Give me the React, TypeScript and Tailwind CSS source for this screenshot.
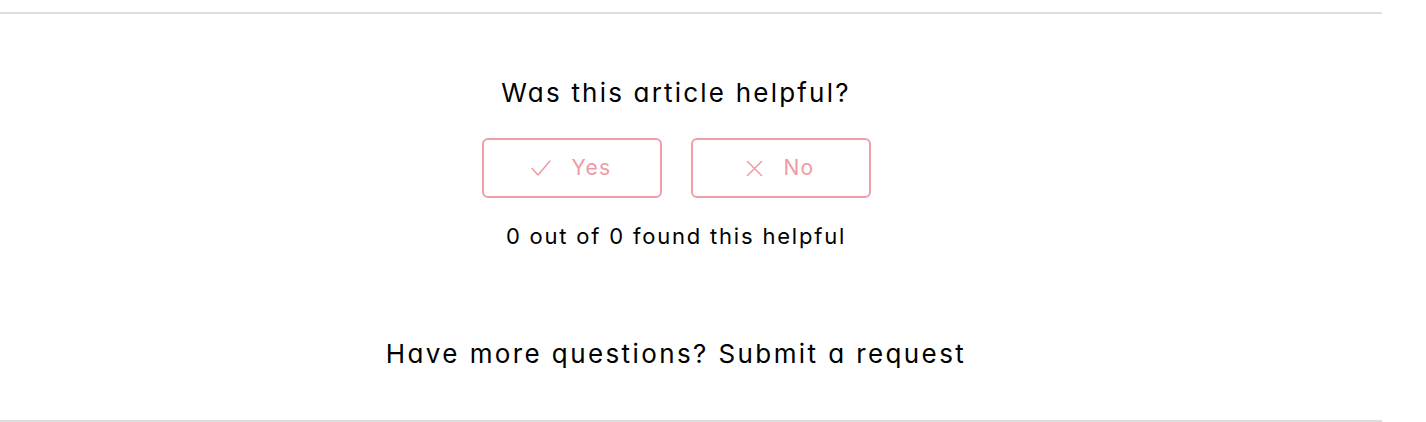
const btn =
  "w-[180px] h-[60px] border-2 border-[#f09ea7] rounded-[6px] flex items-center justify-center gap-[20px] text-[#ef9aa4] text-[21px] tracking-[1.4px]";

function CheckIcon() {
  return (
    <svg width="20" height="16" viewBox="0 0 20 16" fill="none" stroke="currentColor" strokeWidth="1.5" strokeLinecap="round" strokeLinejoin="round">
      <path d="M1 8.5 L7 15 L19 1" />
    </svg>
  );
}

function CrossIcon() {
  return (
    <svg width="17" height="17" viewBox="0 0 17 17" fill="none" stroke="currentColor" strokeWidth="1.5" strokeLinecap="round">
      <path d="M1.5 1.5 L15.5 15.5 M15.5 1.5 L1.5 15.5" />
    </svg>
  );
}

export default function App() {
  return (
    <div className="w-[1426px] h-[422px] bg-white text-black font-['Inter',sans-serif] [font-feature-settings:'cv11']">
      <div className="w-[1382px] pt-3">
        <div className="h-[2px] bg-[#dddddd]" />
        <div className="w-[1352px] flex flex-col items-center">
          <h2 className="mt-[63px] text-[26px] leading-[32px] font-normal tracking-[2.2px]">Was this article helpful?</h2>
          <div className="mt-[29px] flex gap-[29px]">
            <button className={btn}>
              <CheckIcon />
              <span>Yes</span>
            </button>
            <button className={btn}>
              <CrossIcon />
              <span>No</span>
            </button>
          </div>
          <p className="mt-[24px] text-[22px] leading-[28px] tracking-[1.8px]">0 out of 0 found this helpful</p>
          <p className="mt-[88px] text-[26px] leading-[32px] tracking-[2.4px]">
            Have more questions? <a className="text-black">Submit a request</a>
          </p>
        </div>
      </div>
      <div className="w-[1382px] mt-[50px] h-[2px] bg-[#dddddd]" />
    </div>
  );
}
